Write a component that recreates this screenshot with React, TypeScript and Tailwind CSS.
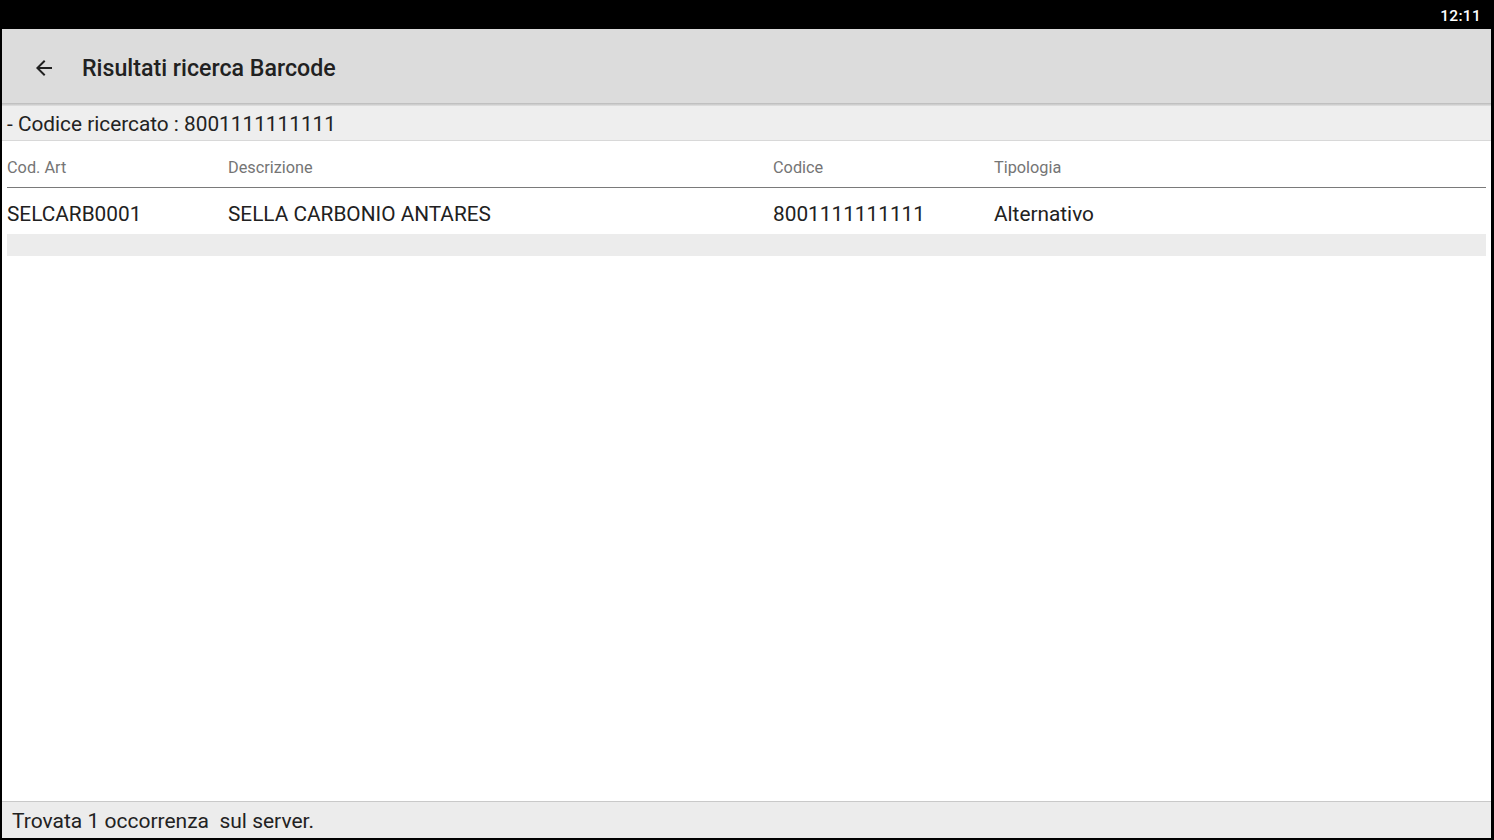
import React from "react";

export default function App() {
  const font = { fontFamily: "Roboto, 'Noto Sans', sans-serif" };
  return (
    <div className="w-[1494px] h-[840px] bg-black flex flex-col overflow-hidden" style={font}>
      <div className="h-[29px] flex items-center justify-end pr-[13px] pt-[4px] shrink-0">
        <span className="text-white text-[15.5px] font-medium tracking-[0.3px]">12:11</span>
      </div>
      <div className="flex-1 ml-[2px] mr-[3px] mb-[2px] bg-white flex flex-col min-h-0">
        <div className="h-[74px] bg-[#dcdcdc] flex items-center pt-[4px] shrink-0">
          <div className="w-[80px] flex items-center pl-[30px]">
            <svg width="24" height="24" viewBox="0 0 24 24" fill="none">
              <path d="M20 11H7.83l5.59-5.59L12 4l-8 8 8 8 1.41-1.41L7.83 13H20v-2z" fill="#212121" />
            </svg>
          </div>
          <span className="text-[23.2px] font-medium text-[#212121]">Risultati ricerca Barcode</span>
        </div>
        <div className="h-[3px] bg-gradient-to-b from-[#b9b9b9] to-[#e2e2e2] shrink-0" />
        <div className="h-[35px] bg-[#eeeeee] border-b border-[#d8d8d8] flex items-center pl-[5px] pt-[4px] shrink-0">
          <span className="text-[20.8px] text-[#222222]">- Codice ricercato : 8001111111111</span>
        </div>
        <div className="px-[5px] flex flex-col flex-1">
          <div className="h-[47px] flex items-center border-b-[1.5px] border-[#7a7a7a] pt-[8px] text-[16.3px] text-[#757575]">
            <div className="w-[221px]">Cod. Art</div>
            <div className="w-[545px]">Descrizione</div>
            <div className="w-[221px]">Codice</div>
            <div className="flex-1">Tipologia</div>
          </div>
          <div className="h-[46px] flex items-center text-[20.8px] text-[#212121] pt-[7px]">
            <div className="w-[221px]">SELCARB0001</div>
            <div className="w-[545px]">SELLA CARBONIO ANTARES</div>
            <div className="w-[221px]">8001111111111</div>
            <div className="flex-1">Alternativo</div>
          </div>
          <div className="h-[22px] bg-[#ececec]" />
        </div>
        <div className="h-[37px] bg-[#ececec] border-t border-[#c9c9c9] flex items-center pl-[10px] pt-[4px] shrink-0">
          <span className="text-[21px] text-[#222222] whitespace-pre">Trovata 1 occorrenza  sul server.</span>
        </div>
      </div>
    </div>
  );
}
